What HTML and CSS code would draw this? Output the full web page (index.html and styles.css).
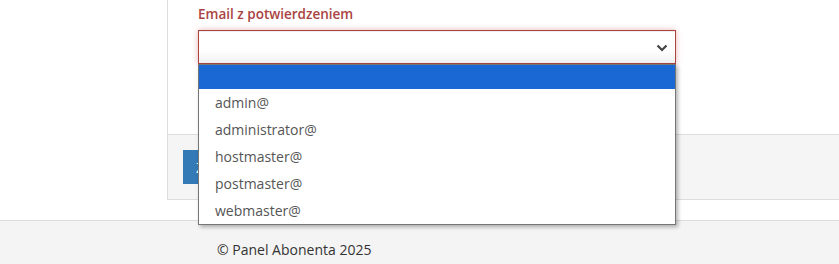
FILE: index.html
```html
<!DOCTYPE html>
<html lang="pl">
<head>
    <meta charset="UTF-8">
    <meta name="viewport" content="width=device-width, initial-scale=1.0">
    <title>Panel Abonenta</title>
    <link rel="stylesheet" href="styles.css">
</head>
<body>

    <div class="page">
        <div class="panel">
            <div class="panel-body">
                <div class="form-group has-error">
                    <label class="control-label">Email z potwierdzeniem</label>
                    <div class="select-box">
                        <svg class="select-arrow" width="12" height="8" viewBox="0 0 12 8">
                            <path d="M1.5 1.5 L6 6 L10.5 1.5" fill="none" stroke="#444" stroke-width="2.2"/>
                        </svg>
                    </div>
                </div>
            </div>
            <div class="panel-footer">
                <button class="btn-primary">Zapisz</button>
            </div>
        </div>
    </div>

    <!-- Otwarta lista opcji -->
    <ul class="select-options">
        <li class="selected"></li>
        <li>admin@</li>
        <li>administrator@</li>
        <li>hostmaster@</li>
        <li>postmaster@</li>
        <li>webmaster@</li>
    </ul>

    <footer class="footer">
        <p>&copy; Panel Abonenta 2025</p>
    </footer>

</body>
</html>
```

FILE: styles.css
```css
body {
    margin: 0;
    font-family: "Open Sans", Arial, sans-serif;
    font-size: 14px;
    color: #333;
    background-color: #fff;
}

.page {
    height: 220px;
    overflow: hidden;
}

.panel {
    margin-left: 167px;
    width: 900px;
    border: 1px solid #ddd;
    border-top: none;
    background-color: #fff;
}

.panel-body {
    height: 134px;
    padding-left: 30px;
    box-sizing: border-box;
}

.form-group {
    width: 478px;
    padding-top: 4px;
}

.control-label {
    display: block;
    height: 26px;
    line-height: 20px;
    font-size: 13.5px;
    font-weight: 600;
    color: #a94442;
}

.select-box {
    position: relative;
    height: 34px;
    box-sizing: border-box;
    border: 1px solid #a94442;
    background: linear-gradient(#fff 60%, #f1f1f1);
    box-shadow: inset 0 1px 1px rgba(0, 0, 0, 0.075), 0 0 6px #e8b4b3;
}

.select-arrow {
    position: absolute;
    right: 7px;
    top: 13px;
}

.panel-footer {
    height: 65px;
    padding: 15px;
    box-sizing: border-box;
    background-color: #f5f5f5;
    border-top: 1px solid #ddd;
}

.btn-primary {
    display: block;
    height: 34px;
    padding: 0 13px;
    border: none;
    background-color: #337ab7;
    color: white;
    font-family: inherit;
    font-size: 14px;
}

.select-options {
    position: absolute;
    left: 198px;
    top: 64px;
    width: 478px;
    height: 161px;
    box-sizing: border-box;
    margin: 0;
    padding: 0;
    list-style: none;
    background-color: #fff;
    border: 1px solid #767676;
    box-shadow: 2px 2px 4px rgba(0, 0, 0, 0.3);
}

.select-options li {
    height: 27px;
    line-height: 27px;
    padding-left: 16px;
    color: #555;
}

.select-options li.selected {
    height: 24px;
    background-color: #1a68d4;
}

.footer {
    height: 44px;
    box-sizing: border-box;
    border-top: 1px solid #ddd;
    background-color: #f4f4f4;
}

.footer p {
    margin: 0;
    padding: 19px 0 0 217px;
    line-height: 20px;
    color: #333;
}
```
